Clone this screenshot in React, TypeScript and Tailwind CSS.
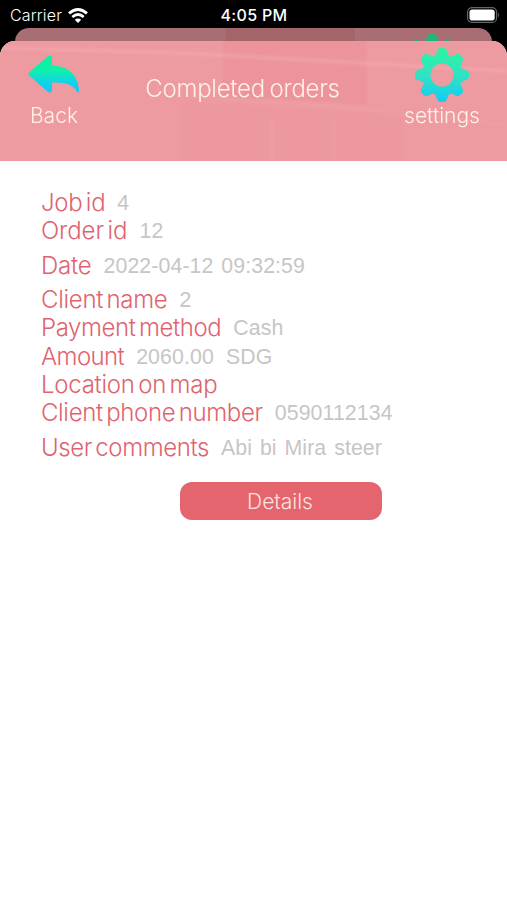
import type { ReactNode } from 'react'

const TEETH = [0, 45, 90, 135, 180, 225, 270, 315]

const ROWS = [
  { label: 'Job id', value: '4', height: 'h-[28px]', tracking: 'tracking-[-0.3px]' },
  { label: 'Order id', value: '12', height: 'h-[28px]', tracking: 'tracking-[-0.1px]' },
  { label: 'Date', value: '2022-04-12 09:32:59', height: 'h-[41px]', tracking: 'tracking-[-0.2px]' },
  { label: 'Client name', value: '2', height: 'h-[28px]', tracking: 'tracking-[-0.3px]' },
  { label: 'Payment method', value: 'Cash', height: 'h-[28px]', tracking: 'tracking-[-0.4px]' },
  { label: 'Amount', value: '2060.00\u00a0\u2009SDG', height: 'h-[29px]', tracking: 'tracking-[-0.6px]' },
  { label: 'Location on map', value: '', height: 'h-[28px]', tracking: 'tracking-[-0.25px]' },
  { label: 'Client phone number', value: '0590112134', height: 'h-[28px]', tracking: 'tracking-[-0.35px]' },
  { label: 'User comments', value: 'Abi bi Mira steer', height: 'h-[41px]', tracking: 'tracking-[-0.4px]' },
]

function GearIcon({ className }: { className?: string }) {
  return (
    <svg viewBox="-28 -28 56 56" className={className}>
      <defs>
        <linearGradient id="gear-fill" x1="0" y1="0" x2="0" y2="1">
          <stop offset="0" stopColor="#2cf5a0" />
          <stop offset="0.5" stopColor="#2fe3c2" />
          <stop offset="1" stopColor="#12ccf5" />
        </linearGradient>
        <mask id="gear-shape" maskUnits="userSpaceOnUse" x="-28" y="-28" width="56" height="56">
          <circle r="20" fill="white" />
          {TEETH.map(deg => (
            <path
              key={deg}
              d="M-9 -17 C-6.5 -19 -6 -21 -5 -24 Q-4 -27 -2 -27 H2 Q4 -27 5 -24 C6 -21 6.5 -19 9 -17 Z"
              fill="white"
              transform={`rotate(${deg})`}
            />
          ))}
          <circle r="11.5" fill="black" />
        </mask>
      </defs>
      <rect x="-28" y="-28" width="56" height="56" fill="url(#gear-fill)" mask="url(#gear-shape)" />
    </svg>
  )
}

function BackIcon() {
  return (
    <svg viewBox="0 0 52 40" className="w-[52px] h-[40px]">
      <defs>
        <linearGradient id="back-fill" x1="0" y1="0" x2="0" y2="1">
          <stop offset="0" stopColor="#06f59a" />
          <stop offset="0.4" stopColor="#10f0ac" />
          <stop offset="0.72" stopColor="#12d2ea" />
          <stop offset="1" stopColor="#14c6f5" />
        </linearGradient>
      </defs>
      <path
        d="M1.2 17.2 L19.5 1.6 Q23.8 -0.6 24 3.8 V10.3 C39 11.3 49 18.5 51 34 Q51.2 39 49.5 37.5 C46 29.5 37 27 24 27.5 V34.5 Q23.8 39 19.5 36.5 L1.2 20.5 Q-0.5 18.8 1.2 17.2 Z"
        fill="url(#back-fill)"
      />
    </svg>
  )
}

function StatusBar() {
  return (
    <div className="grid grid-cols-3 items-center h-[28px] pt-[2px] pl-[10px] pr-[7px] text-white">
      <div className="flex items-center gap-[6px] text-[16px] font-light tracking-[0.15px]">
        Carrier
        <svg viewBox="0 0 20 15" className="w-[20px] h-[15px]" fill="none" stroke="white" strokeWidth="2.8">
          <path d="M1 5.4 Q10 -2.4 19 5.4" />
          <path d="M4.3 9 Q10 4 15.7 9" />
          <path d="M10 15 L6.8 11.8 Q10 9 13.2 11.8 Z" fill="white" stroke="none" />
        </svg>
      </div>
      <div className="-ml-[2px] text-center text-[16px] font-medium tracking-[0.35px]">4:05 PM</div>
      <svg viewBox="0 0 33 16" className="justify-self-end w-[33px] h-[16px]">
        <rect x="0.6" y="0.6" width="29" height="14.8" rx="4.5" fill="none" stroke="#666" strokeWidth="1.2" />
        <rect x="2.5" y="2.5" width="25.2" height="11" rx="2.8" fill="white" />
        <path d="M31 5.5 Q33 8 31 10.5 Z" fill="#666" />
      </svg>
    </div>
  )
}

function HeaderAction({ label, children }: { label: string; children: ReactNode }) {
  return (
    <div className="flex flex-col items-center w-[90px]">
      <div className="flex items-center justify-center h-[62px]">{children}</div>
      <div className="-mt-[2px] text-[21px] leading-[24px] font-light">{label}</div>
    </div>
  )
}

function HeaderTexture() {
  return (
    <svg viewBox="0 0 507 120" className="absolute inset-0 w-full h-full">
      <defs>
        <filter id="soften" x="-10%" y="-50%" width="120%" height="200%">
          <feGaussianBlur stdDeviation="1.5" />
        </filter>
      </defs>
      <g filter="url(#soften)">
        <path d="M223 -5 H366 V64 L223 55 Z" fill="#e98391" opacity="0.3" />
        <path d="M180 60 L400 72 V125 H180 Z" fill="#e98391" opacity="0.1" />
        <path d="M0 7 L180 12 L507 30" fill="none" stroke="#f7bcc0" strokeWidth="3" opacity="0.35" />
        <path d="M220 58 L340 66 L507 84" fill="none" stroke="#f7bcc0" strokeWidth="2" opacity="0.2" />
        <path d="M272 80 V120 M334 80 V120" stroke="#f7bcc0" strokeWidth="2" opacity="0.2" />
      </g>
    </svg>
  )
}

export default function App() {
  return (
    <div className="h-[900px] bg-black font-[Inter,'Liberation_Sans',sans-serif]">
      <StatusBar />
      <div className="flex mx-[15px] h-[28px] -mb-[15px] rounded-t-[14px] bg-[linear-gradient(90deg,#a96d74_0_211px,#a3646a_211px_340px,#a96d74_340px)] overflow-hidden">
        <GearIcon className="shrink-0 ml-[389px] mt-[5px] w-[56px] h-[56px] brightness-75" />
      </div>
      <div className="relative h-[859px] rounded-t-[15px] overflow-hidden bg-white">
        <header className="relative h-[120px] bg-[#ee9aa1] text-[#fff0ea]">
          <HeaderTexture />
          <div className="relative flex justify-between pt-[3px] pl-[9px] pr-[20px]">
            <HeaderAction label="Back"><BackIcon /></HeaderAction>
            <h1 className="-ml-[11px] pt-[29px] text-[24px] leading-[32px] font-light tracking-[-0.25px] [word-spacing:-2px]">
              Completed orders
            </h1>
            <HeaderAction label="settings"><GearIcon className="w-[56px] h-[56px]" /></HeaderAction>
          </div>
        </header>
        <main className="pt-[28px]">
          {ROWS.map(row => (
            <div key={row.label} className={`flex items-center pl-[41px] whitespace-nowrap ${row.height}`}>
              <span className={`text-[24px] font-light text-[#e0636f] [word-spacing:-3px] ${row.tracking}`}>
                {row.label}
              </span>
              <span className="pt-[2px] ml-[12px] text-[21.3px] tracking-[0.1px] text-[#c6c6c6] [word-spacing:1.8px] font-['Liberation_Sans',sans-serif]">
                {row.value}
              </span>
            </div>
          ))}
          <button className="block ml-[180px] mt-[14px] w-[202px] h-[38px] pt-px pr-[2px] rounded-[12px] bg-[#e5656f] text-[#fde3df] text-[21px] font-light">
            Details
          </button>
        </main>
      </div>
    </div>
  )
}
